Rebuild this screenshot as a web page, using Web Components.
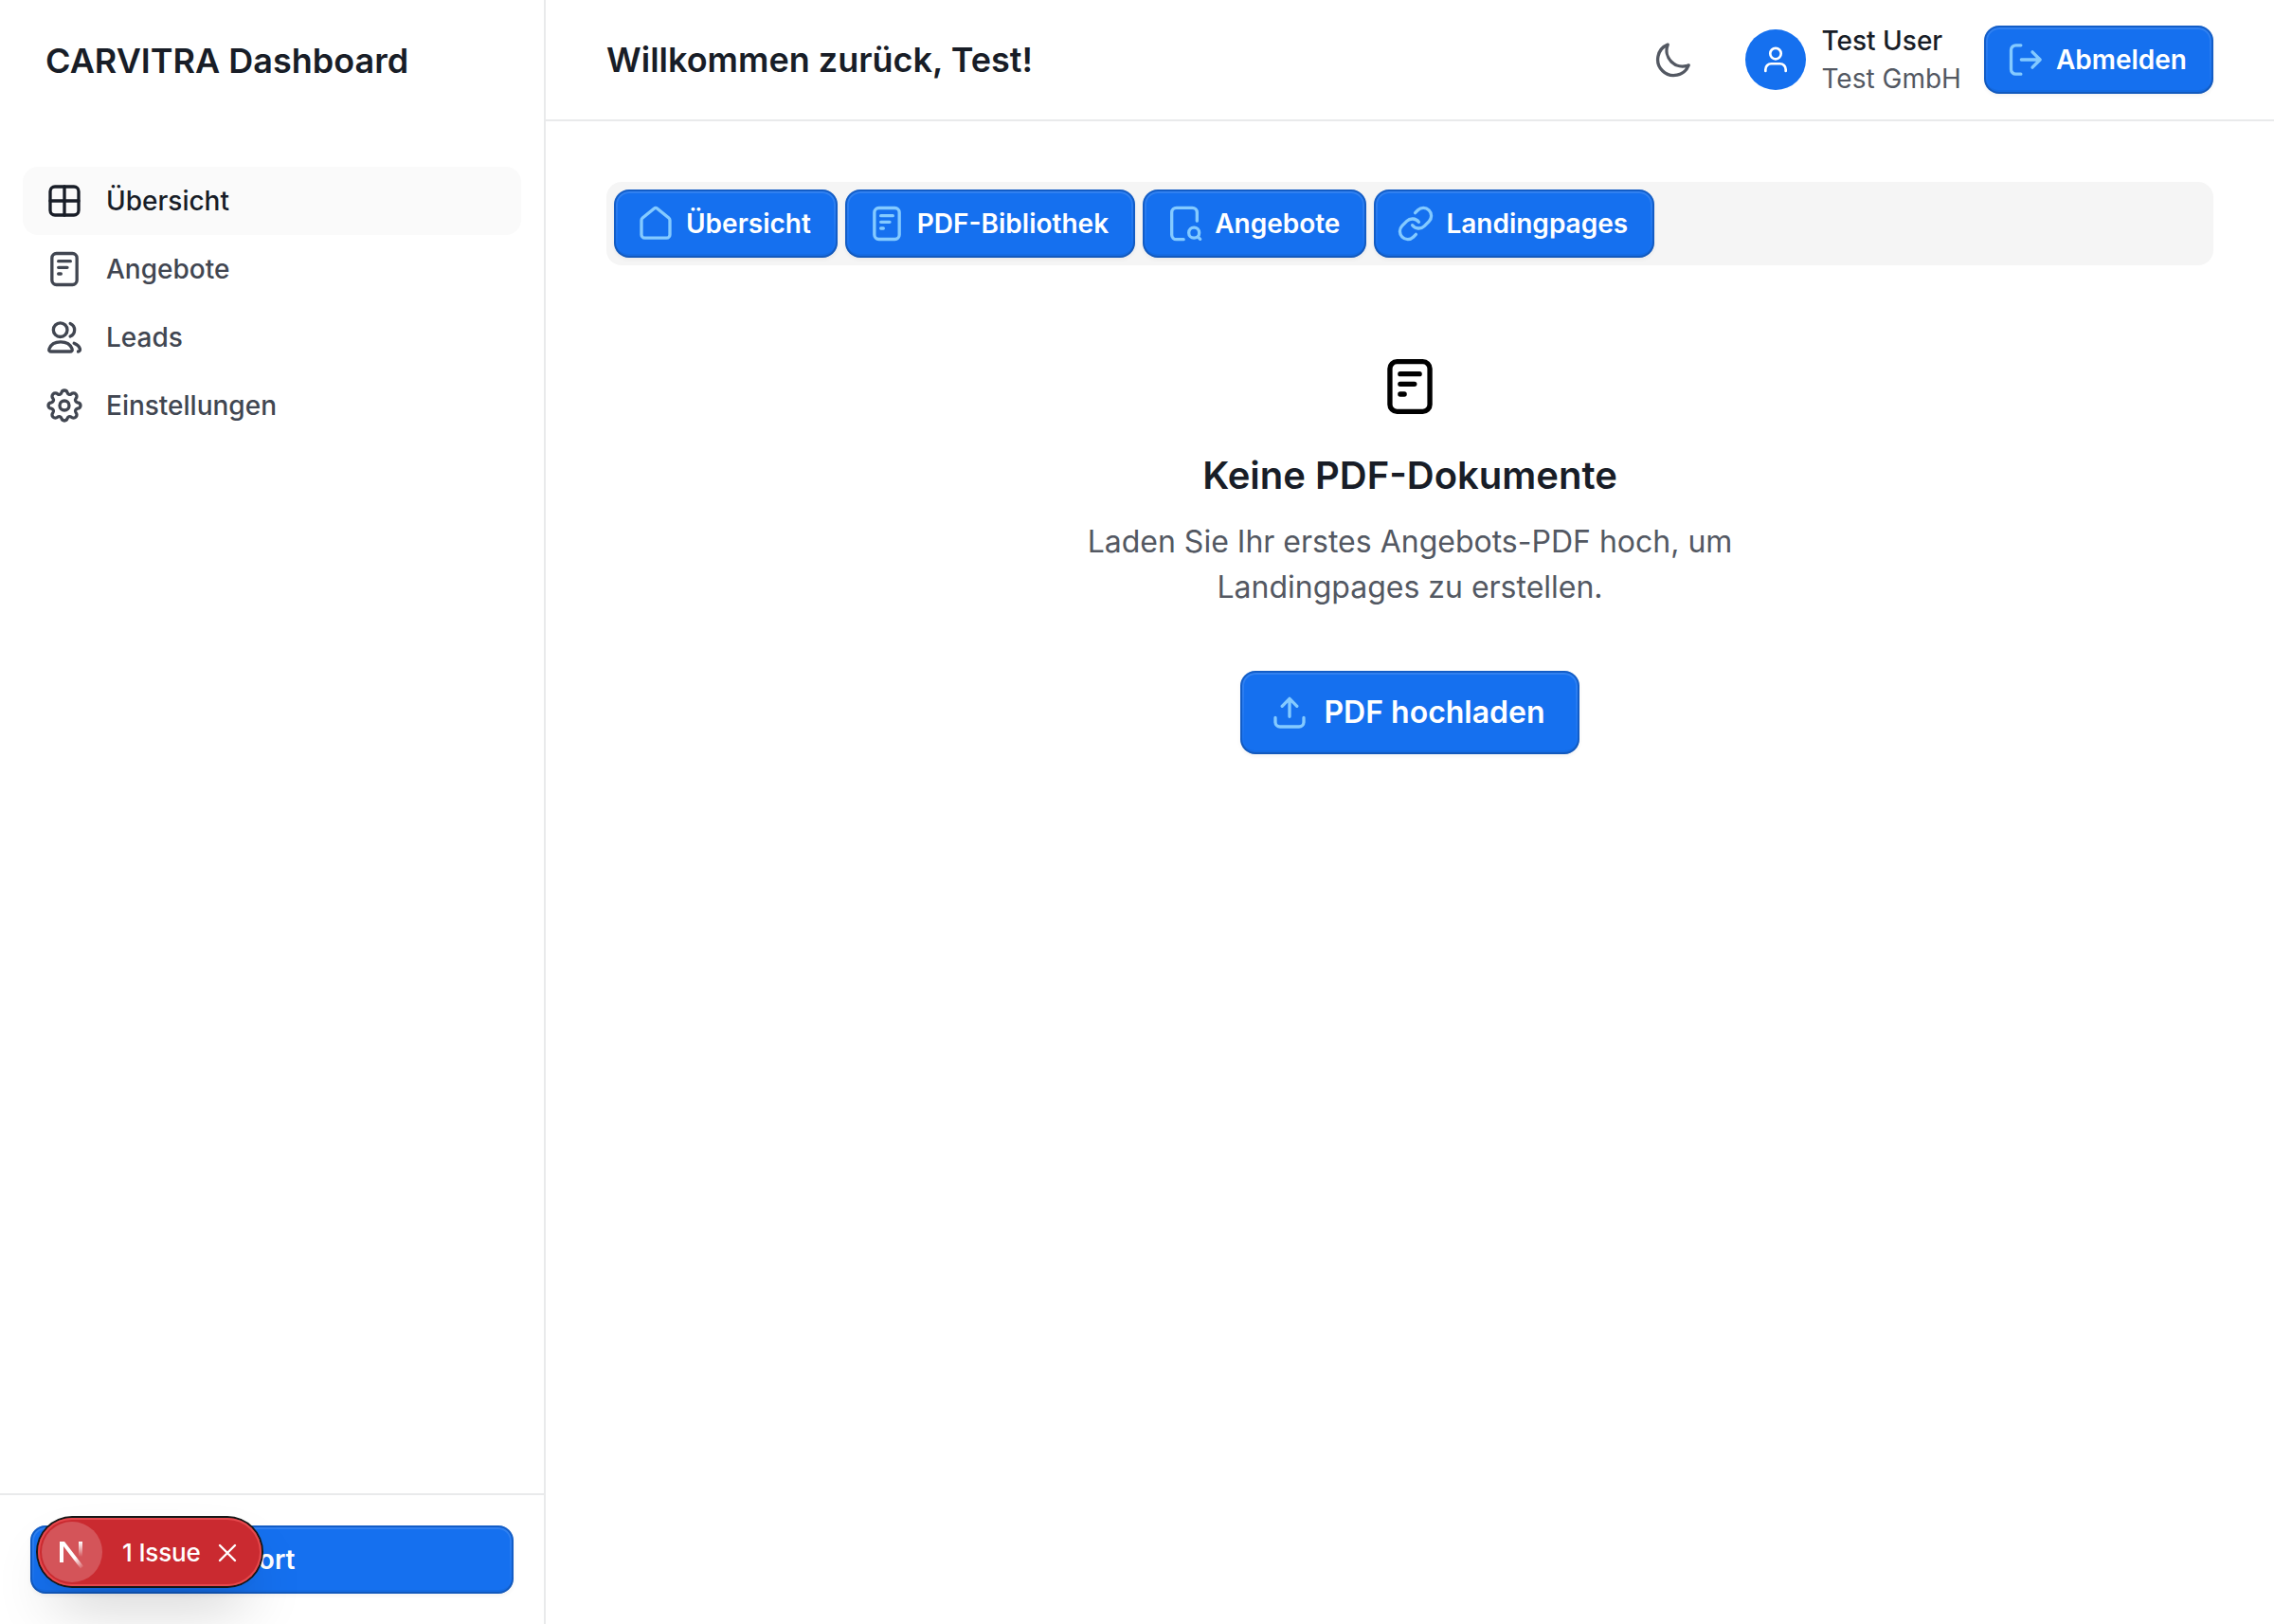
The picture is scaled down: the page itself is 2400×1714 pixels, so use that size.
<!DOCTYPE html>
<html lang="de"><head><meta charset="utf-8"><title>CARVITRA Dashboard</title>
<style>
html,body{margin:0;height:100%;background:#fff}
body{font-family:Inter,"Liberation Sans",sans-serif;color:#181d27;-webkit-font-smoothing:antialiased}
</style></head><body>
<app-dashboard></app-dashboard>
<script>
const ICONS={
 grid:'<rect x="3" y="3" width="18" height="18" rx="3"/><path d="M12 3v18M3 12h18"/>',
 doc:'<rect x="4.100" y="2.100" width="15.800" height="19.800" rx="2.800"/><path d="M8.200 7h7.600M8.200 11h5.600M8.200 15h1.600"/>',
 users:'<circle cx="9.400" cy="7.300" r="4.400"/><path d="M9.600 14.900c-3.600 0-6.300 1.800-7.200 4.300-.4 1.100.2 1.800 1.200 1.800h12c1 0 1.600-.7 1.200-1.800-.9-2.500-3.600-4.300-7.200-4.300Z"/><path d="M15.700 3.300a4.400 4.400 0 0 1 0 8.100M18.100 15.800c1.900.8 3.200 2 3.700 3.400.3.900-.1 1.700-1.100 1.800"/>',
 gear:'<path d="M10.200 3.700a1.900 1.900 0 0 1 3.600 0c.3 1.200 1.500 1.700 2.500 1a1.900 1.900 0 0 1 2.900 2.900c-.7 1 0 2.200 1.100 2.500a1.900 1.900 0 0 1 0 3.800c-1.100.3-1.800 1.500-1.100 2.500a1.900 1.900 0 0 1-2.900 2.900c-1-.7-2.200-.2-2.500 1a1.900 1.900 0 0 1-3.600 0c-.3-1.200-1.500-1.700-2.500-1a1.900 1.900 0 0 1-2.900-2.900c.7-1 0-2.200-1.100-2.500a1.900 1.900 0 0 1 0-3.800c1.100-.3 1.800-1.500 1.100-2.500a1.900 1.900 0 0 1 2.900-2.900c1 .7 2.200.2 2.500-1Z"/><circle cx="12" cy="12" r="3"/>',
 moon:'<path d="M8.500 2.500A10.100 10.100 0 1 0 21.700 15.500 10.100 10.100 0 0 1 8.500 2.500Z"/>',
 user:'<circle cx="12" cy="7.200" r="4.300"/><path d="M4 21v-1.300a4.500 4.500 0 0 1 4.500-4.500h7a4.500 4.500 0 0 1 4.500 4.500V21"/>',
 logout:'<path d="M8.900 2.900H5.700a3 3 0 0 0-3 3v12.200a3 3 0 0 0 3 3h3.200M9.200 12H21M16.200 7.100l4.900 4.900-4.900 4.900"/>',
 home:'<path d="M3 9.900a2 2 0 0 1 .7-1.500L10.900 2.500a1.700 1.700 0 0 1 2.200 0l7.200 5.900a2 2 0 0 1 .7 1.500V19a2.100 2.100 0 0 1-2.100 2.100H5.100A2.100 2.100 0 0 1 3 19Z"/>',
 search:'<path d="M11.500 22H7a3 3 0 0 1-3-3V5a3 3 0 0 1 3-3h10a3 3 0 0 1 3 3v5.300"/><circle cx="18.100" cy="17.800" r="3.300"/><path d="m20.500 20.300 1.500 1.500"/>',
 link:'<path d="M10 13a5 5 0 0 0 7.540.54l3-3a5 5 0 0 0-7.070-7.070l-1.720 1.710"/><path d="M14 11a5 5 0 0 0-7.540-.54l-3 3a5 5 0 0 0 7.070 7.070l1.710-1.710"/>',
 upload:'<path d="M3 15.300V18a3 3 0 0 0 3 3h12a3 3 0 0 0 3-3v-2.700M12 14.600V3.200M7.300 8 12 3.200 16.700 8"/>',
 close:'<path d="m4 4 16 16M20 4 4 20"/>'
};
function define(name,css,html){
 customElements.define(name,class extends HTMLElement{
  connectedCallback(){
   if(this.shadowRoot)return;
   this.attachShadow({mode:'open'}).innerHTML='<style>:host{box-sizing:border-box}'+css+'</style>'+html;
  }
 });
}
customElements.define('ui-icon',class extends HTMLElement{
 connectedCallback(){
  if(this.shadowRoot)return;
  const s=this.getAttribute('size')||40,w=this.getAttribute('stroke')||2;
  this.attachShadow({mode:'open'}).innerHTML=`<style>:host{display:block;flex:none;width:${s}px;height:${s}px}svg{display:block;overflow:visible}</style><svg width="${s}" height="${s}" viewBox="0 0 24 24" fill="none" stroke="currentColor" stroke-width="${w}" stroke-linecap="round" stroke-linejoin="round">${ICONS[this.getAttribute('name')]}</svg>`;
 }
});
define('ui-button',`
:host{position:relative;display:flex;align-items:center;justify-content:center;gap:12px;height:72px;padding:0 28px 0 24px;border-radius:16px;background:#1570ef;color:#fff;font-size:28px;line-height:40px;font-weight:600;white-space:nowrap;
 box-shadow:inset 0 0 0 2px rgba(10,13,18,.18),inset 0 -4px 0 rgba(10,13,18,.05),0 2px 4px rgba(10,13,18,.05)}
:host::before{content:"";position:absolute;inset:2px;border:2px solid rgba(255,255,255,.12);border-radius:14px;-webkit-mask-image:linear-gradient(#000,transparent);mask-image:linear-gradient(#000,transparent)}
:host([size=lg]){height:88px;padding:0 36px 0 32px;font-size:32px;gap:16px}
::slotted(ui-icon){color:#84caff}`,'<slot name="icon"></slot><slot></slot>');
define('nav-item',`
:host{display:flex;align-items:center;gap:24px;height:72px;padding:0 24px;border-radius:16px;font-size:28px;line-height:40px;font-weight:500;color:#414651}
:host([active]){background:#fafafa;color:#181d27}`,'<slot name="icon"></slot><slot></slot>');
define('issue-badge',`
:host{position:absolute;left:40px;top:1602px;width:236px;height:72px;border-radius:36px;display:flex;align-items:center;background:#ca2a30;color:#fff;font-size:26px;line-height:36px;font-weight:500;
 box-shadow:0 0 0 2px #171717,inset 0 0 0 2px #e5484d,0 32px 64px -16px rgba(0,0,0,.24),0 8px 16px -8px rgba(0,0,0,.04)}
.logo{display:flex;margin-left:4px;width:64px;height:64px;border-radius:50%;background:rgba(255,255,255,.2)}
.label{margin:2px 0 0 21px;width:84px;white-space:nowrap;letter-spacing:-.15px}
ui-icon{margin:2px 0 0 15px}`,`
<span class="logo"><svg width="64" height="64" viewBox="0 0 64 64" fill="none">
<defs><linearGradient id="a" gradientUnits="userSpaceOnUse" x1="36" y1="38" x2="44" y2="49"><stop stop-color="#fff"/><stop offset="1" stop-color="#fff" stop-opacity="0"/></linearGradient><linearGradient id="b" x1="0" y1="0" x2="0" y2="1"><stop stop-color="#fff"/><stop offset="1" stop-color="#fff" stop-opacity="0"/></linearGradient></defs>
<path fill="url(#a)" d="M19 21h5l20 26-3 2.500L23 26v17h-4Z"/><rect x="39" y="21" width="4" height="16" fill="url(#b)"/></svg></span>
<span class="label">1 Issue</span><ui-icon name="close" size="24" stroke="2.400"></ui-icon>`);
define('side-bar',`
:host{display:flex;flex-direction:column;width:576px;flex:none;border-right:2px solid #e9eaeb}
h2{margin:0;height:128px;line-height:128px;padding-left:48px;font-size:36px;font-weight:600}
nav{margin-top:48px;padding:0 24px;flex:1}
footer{border-top:2px solid #e9eaeb;padding:32px}
ui-button{padding:0 60px 0 0}`,`
<h2>CARVITRA Dashboard</h2>
<nav><nav-item active><ui-icon slot="icon" name="grid"></ui-icon>Übersicht</nav-item>
<nav-item><ui-icon slot="icon" name="doc"></ui-icon>Angebote</nav-item>
<nav-item><ui-icon slot="icon" name="users"></ui-icon>Leads</nav-item>
<nav-item><ui-icon slot="icon" name="gear"></ui-icon>Einstellungen</nav-item></nav>
<footer><ui-button>Support</ui-button></footer>`);
define('top-bar',`
:host{display:flex;align-items:center;height:128px;padding:0 64px;border-bottom:2px solid #e9eaeb}
h1{margin:0;flex:1;font-size:36px;line-height:56px;font-weight:600}
.theme{color:#535862;margin-right:56px}
.avatar{display:flex;align-items:center;justify-content:center;width:64px;height:64px;border-radius:50%;background:#1570ef;color:#fff}
.who{margin:0 24px 0 16px;font-size:28px;line-height:40px;white-space:nowrap}
.who b{display:block;font-weight:500}.who span{display:block;color:#535862}`,`
<h1>Willkommen zurück, Test!</h1>
<ui-icon class="theme" name="moon"></ui-icon>
<span class="avatar"><ui-icon name="user" size="32"></ui-icon></span>
<div class="who"><b>Test User</b><span>Test GmbH</span></div>
<ui-button><ui-icon slot="icon" name="logout"></ui-icon>Abmelden</ui-button>`);
define('tab-bar',`
:host{display:flex;gap:8px;padding:8px;height:88px;border-radius:16px;background:#f5f5f5}`,'<slot></slot>');
define('empty-state',`
:host{display:flex;flex-direction:column;align-items:center;padding-top:96px;text-align:center}
ui-icon.big{color:#000}
h3{margin:32px 0 0;font-size:40px;line-height:60px;font-weight:600}
p{margin:16px 0 64px;width:704px;font-size:32px;line-height:48px;color:#535862}`,`
<ui-icon class="big" name="doc" size="64"></ui-icon>
<h3>Keine PDF-Dokumente</h3>
<p>Laden Sie Ihr erstes Angebots-PDF hoch, um Landingpages zu erstellen.</p>
<ui-button size="lg"><ui-icon slot="icon" name="upload"></ui-icon>PDF hochladen</ui-button>`);
define('app-dashboard',`
:host{display:flex;height:1714px;overflow:hidden;position:relative}
main{flex:1;min-width:0}
section{padding:64px}`,`
<side-bar></side-bar>
<main><top-bar></top-bar><section>
<tab-bar><ui-button><ui-icon slot="icon" name="home"></ui-icon>Übersicht</ui-button>
<ui-button><ui-icon slot="icon" name="doc"></ui-icon>PDF-Bibliothek</ui-button>
<ui-button><ui-icon slot="icon" name="search"></ui-icon>Angebote</ui-button>
<ui-button><ui-icon slot="icon" name="link"></ui-icon>Landingpages</ui-button></tab-bar>
<empty-state></empty-state></section></main>
<issue-badge></issue-badge>`);
</script></body></html>
